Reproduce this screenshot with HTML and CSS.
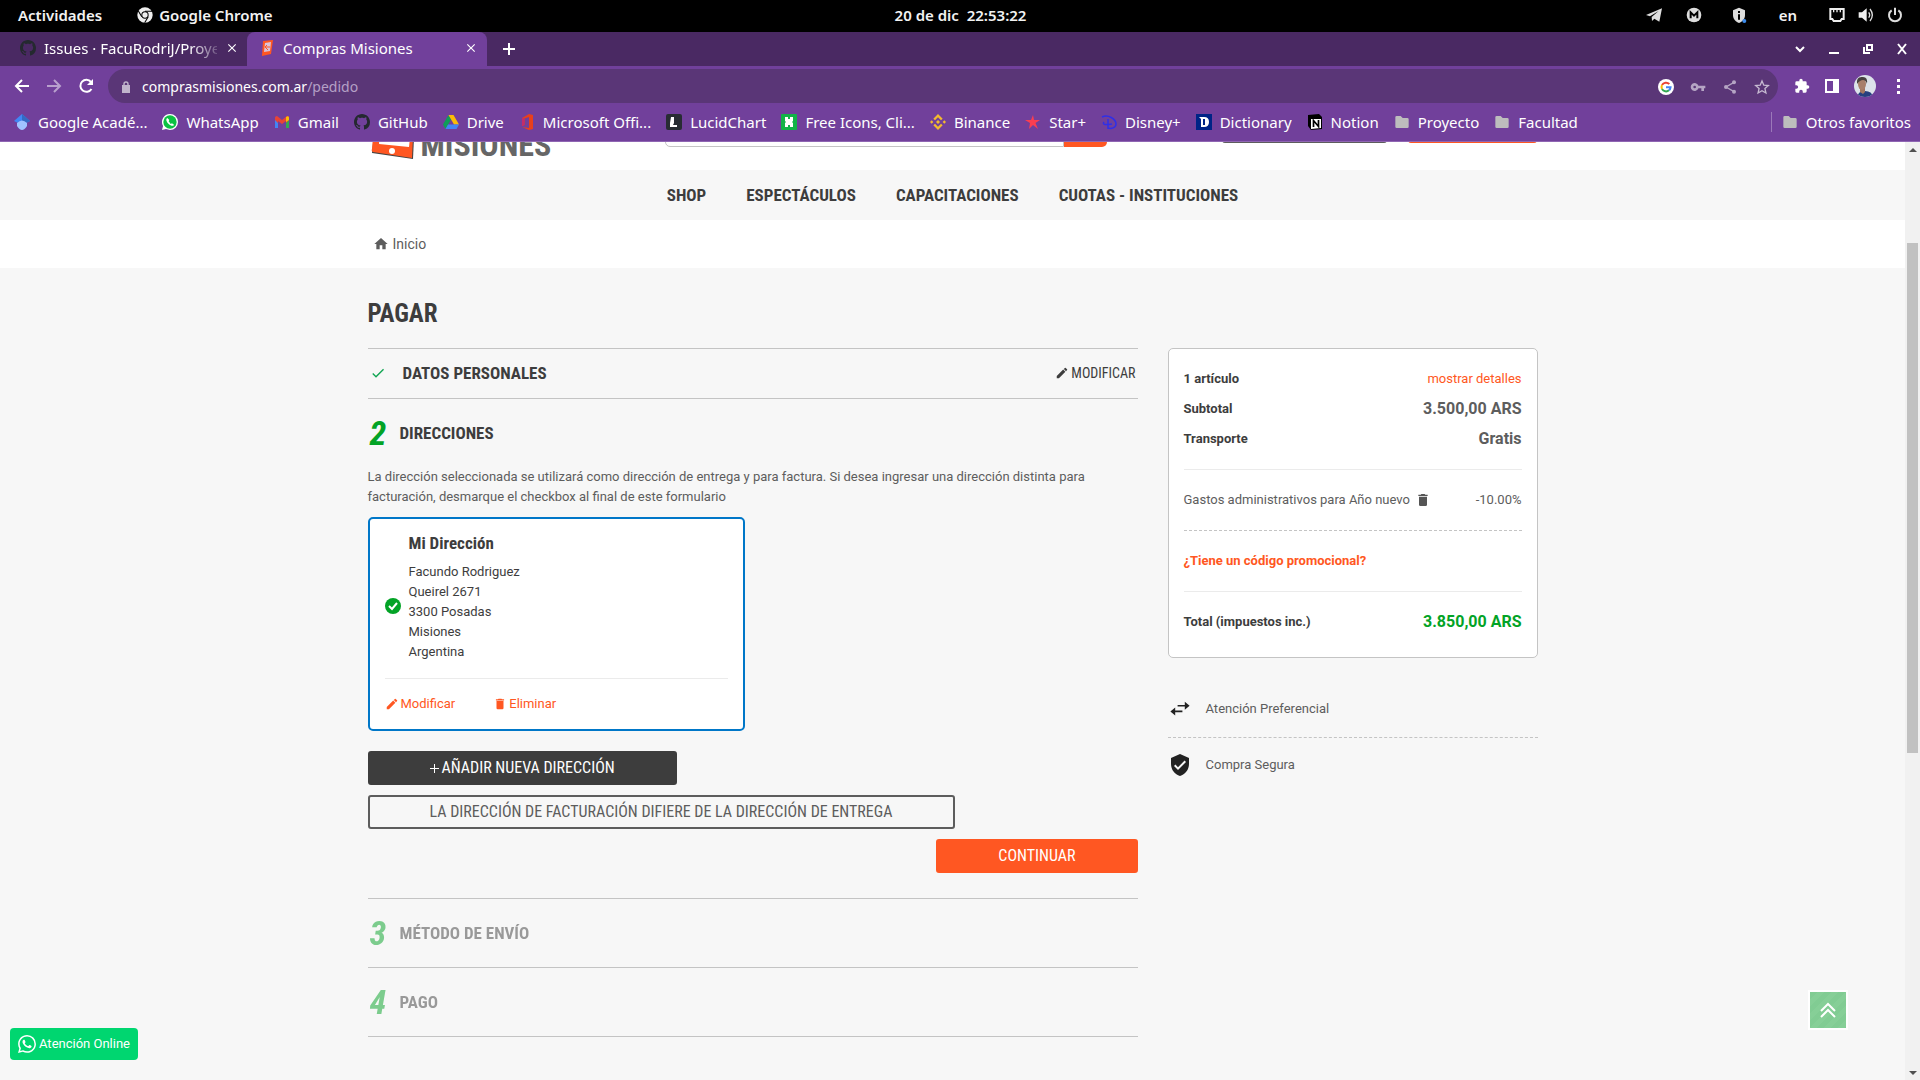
FILE: index.html
```html
<!DOCTYPE html>
<html lang="es">
<head>
<meta charset="utf-8">
<title>Compras Misiones</title>
<link rel="stylesheet" href="styles.css">
</head>
<body>
<svg class="sprite" aria-hidden="true">
  <symbol id="github" viewBox="0 0 16 16"><path d="M8 0C3.58 0 0 3.58 0 8c0 3.54 2.29 6.53 5.47 7.59.4.07.55-.17.55-.38 0-.19-.01-.82-.01-1.49-2.01.37-2.53-.49-2.69-.94-.09-.23-.48-.94-.82-1.13-.28-.15-.68-.52-.01-.53.63-.01 1.08.58 1.23.82.72 1.21 1.87.87 2.33.66.07-.52.28-.87.51-1.07-1.78-.2-3.64-.89-3.64-3.95 0-.87.31-1.59.82-2.15-.08-.2-.36-1.02.08-2.12 0 0 .67-.21 2.2.82.64-.18 1.32-.27 2-.27s1.36.09 2 .27c1.53-1.04 2.2-.82 2.2-.82.44 1.1.16 1.92.08 2.12.51.56.82 1.27.82 2.15 0 3.07-1.87 3.75-3.65 3.95.29.25.54.73.54 1.48 0 1.07-.01 1.93-.01 2.2 0 .21.15.46.55.38A8.01 8.01 0 0 0 16 8c0-4.42-3.58-8-8-8z"/></symbol>
  <symbol id="close" viewBox="0 0 24 24"><path d="M19 6.4 17.600 5 12 10.600 6.400 5 5 6.400 10.600 12 5 17.600 6.400 19 12 13.400 17.600 19 19 17.600 13.400 12z"/></symbol>
  <symbol id="folder" viewBox="0 0 24 24"><path d="M2 5a2 2 0 0 1 2-2h6l3 3h7a2 2 0 0 1 2 2v11a2 2 0 0 1-2 2H4a2 2 0 0 1-2-2z"/></symbol>
  <symbol id="pencil" viewBox="0 0 24 24"><path d="M3 17.250V21h3.750L17.810 9.940l-3.750-3.750zM20.710 7.040a1 1 0 0 0 0-1.410l-2.340-2.340a1 1 0 0 0-1.410 0l-1.830 1.830 3.750 3.750z"/></symbol>
  <symbol id="trash" viewBox="0 0 24 24"><path d="M6 19a2 2 0 0 0 2 2h8a2 2 0 0 0 2-2V7H6zM19 4h-3.500l-1-1h-5l-1 1H5v2h14z"/></symbol>
  <symbol id="whatsapp" viewBox="0 0 24 24"><path d="M17.472 14.382c-.297-.149-1.758-.867-2.030-.967-.273-.099-.471-.148-.670.150-.197.297-.767.966-.940 1.164-.173.199-.347.223-.644.075-.297-.150-1.255-.463-2.390-1.475-.883-.788-1.480-1.761-1.653-2.059-.173-.297-.018-.458.130-.606.134-.133.298-.347.446-.520.149-.174.198-.298.298-.497.099-.198.050-.371-.025-.520-.075-.149-.669-1.612-.916-2.207-.242-.579-.487-.500-.669-.510-.173-.008-.371-.010-.570-.010-.198 0-.520.074-.792.372-.272.297-1.040 1.016-1.040 2.479 0 1.462 1.065 2.875 1.213 3.074.149.198 2.096 3.200 5.077 4.487.709.306 1.262.489 1.694.625.712.227 1.360.195 1.871.118.571-.085 1.758-.719 2.006-1.413.248-.694.248-1.289.173-1.413-.074-.124-.272-.198-.570-.347m-5.421 7.403h-.004a9.870 9.870 0 0 1-5.031-1.378l-.361-.214-3.741.982.998-3.648-.235-.374a9.860 9.860 0 0 1-1.510-5.260c.001-5.450 4.436-9.884 9.888-9.884 2.640 0 5.122 1.030 6.988 2.898a9.825 9.825 0 0 1 2.893 6.994c-.003 5.450-4.437 9.884-9.885 9.884m8.413-18.297A11.815 11.815 0 0 0 12.050 0C5.495 0 .160 5.335.157 11.892c0 2.096.547 4.142 1.588 5.945L.057 24l6.305-1.654a11.882 11.882 0 0 0 5.683 1.448h.005c6.554 0 11.890-5.335 11.893-11.893a11.821 11.821 0 0 0-3.480-8.413z"/></symbol>
</svg>

<header class="topbar">
  <div class="topbar-left">
    <span>Actividades</span>
    <span class="topbar-app"><svg class="i16" viewBox="0 0 24 24"><circle cx="12" cy="12" r="11.500" fill="#eee"/><circle cx="12" cy="12" r="5.500" fill="#000"/><circle cx="12" cy="12" r="4" fill="#eee"/><path d="M12 6.500h10.500M7.200 14.700 2 6M16.800 14.700 11.500 23.500" stroke="#000" stroke-width="1.600" fill="none"/></svg>Google Chrome</span>
  </div>
  <time class="clock">20 de dic&nbsp; 22:53:22</time>
  <div class="topbar-right">
    <svg class="i16" viewBox="0 0 24 24" fill="#ddd"><path d="M0 12 24 2 20 22 12.500 17.500 9 21 8.500 15 19 6 6 14z"/></svg>
    <svg class="i16 gap-a" viewBox="0 0 24 24"><circle cx="12" cy="12" r="11" fill="#ddd"/><path d="M7 17V8l5 5 5-5v9" stroke="#000" stroke-width="3" fill="none"/></svg>
    <svg class="i16 gap-b" viewBox="0 0 24 24"><path d="M12 1 3 5v7c0 6 4 10 9 12 5-2 9-6 9-12V5z" fill="#ddd"/><path d="M12 6v3M12 11v8" stroke="#000" stroke-width="3"/><circle cx="20" cy="21" r="3" fill="#3b8beb"/></svg>
    <span class="lang">en</span>
    <svg class="i16" viewBox="0 0 24 24" fill="none" stroke="#eee" stroke-width="3"><path d="M2 3h20v15h-3l-2 3H7l-2-3H2z"/><path d="M7 4v4M12 4v4M17 4v4" stroke-width="2"/></svg>
    <svg class="i16 gap-c" viewBox="0 0 24 24"><path d="M1 8h5l7-6v20l-7-6H1z" fill="#eee"/><path d="M16 8q3 4 0 8M18 3q7 9 0 18" stroke="#ddd" stroke-width="2" fill="none"/></svg>
    <svg class="i16 gap-c" viewBox="0 0 24 24" fill="none" stroke="#ddd" stroke-width="3"><path d="M7 5a9 9 0 1 0 10 0M12 1v11"/></svg>
  </div>
</header>

<div class="tabstrip">
  <div class="tab">
    <svg class="i16" fill="#24292f"><use href="#github"/></svg>
    <span class="tab-title fade">Issues · FacuRodriJ/Proye</span>
    <button class="icon-btn" aria-label="Cerrar"><svg class="i14"><use href="#close"/></svg></button>
  </div>
  <div class="tab active">
    <svg class="i16" viewBox="0 0 16 16"><path d="m4 1 10-1-2 14-9 2z" fill="#ff5722"/><path d="m6 3 6-1-1 9-6 1z" fill="#d9c3d9"/><path d="M6 7h5M8 5l-2 2 3 3" stroke="#ff5722" fill="none"/></svg>
    <span class="tab-title">Compras Misiones</span>
    <button class="icon-btn" aria-label="Cerrar"><svg class="i14"><use href="#close"/></svg></button>
  </div>
  <button class="icon-btn newtab" aria-label="Nueva pestaña"><svg class="i14" viewBox="0 0 14 14"><path d="M6 1h2v5h5v2H8v5H6V8H1V6h5z"/></svg></button>
  <div class="window-buttons">
    <button class="icon-btn" aria-label="Buscar pestañas"><svg class="i12" viewBox="0 0 12 12" fill="none" stroke="#fff" stroke-width="2"><path d="m2 4 4 4 4-4"/></svg></button>
    <button class="icon-btn" aria-label="Minimizar"><svg class="i12" viewBox="0 0 12 12"><path d="M1 9h10v2H1z"/></svg></button>
    <button class="icon-btn" aria-label="Restaurar"><svg class="i12" viewBox="0 0 12 12" fill="none" stroke="#fff" stroke-width="2"><path d="M5 2h5v5H5zM2 4v6h6"/></svg></button>
    <button class="icon-btn" aria-label="Cerrar ventana"><svg class="i12" viewBox="0 0 12 12" fill="none" stroke="#fff" stroke-width="2"><path d="m2 1 8 10M10 1 2 11"/></svg></button>
  </div>
</div>

<div class="toolbar">
  <button class="icon-btn" aria-label="Atrás"><svg class="i16" viewBox="0 0 16 16" fill="none" stroke="#fff" stroke-width="2"><path d="M15 8H2M8 2 2 8l6 6"/></svg></button>
  <button class="icon-btn dim" aria-label="Adelante"><svg class="i16" viewBox="0 0 16 16" fill="none" stroke="#fff" stroke-width="2"><path d="M1 8h13M8 2l6 6-6 6"/></svg></button>
  <button class="icon-btn" aria-label="Recargar"><svg class="i16" viewBox="0 0 16 16" fill="none" stroke="#fff" stroke-width="2"><path d="M13.500 11A6 6 0 1 1 13 4l1 2"/><path d="M15 1v6H9z" fill="#fff" stroke="none"/></svg></button>
  <div class="omnibox">
    <svg class="i14" viewBox="0 0 14 14" fill="#c0b4cb"><path d="M3 5h8v8H3z"/><path d="M5 6V4a2 2 0 0 1 4 0v2" fill="none" stroke="#c0b4cb" stroke-width="1.400"/></svg>
    <span class="url">comprasmisiones.com.ar<span class="path">/pedido</span></span>
    <svg class="i16" viewBox="0 0 24 24"><circle cx="12" cy="12" r="12" fill="#fff"/><g fill="none" stroke-width="3"><path d="M17 7.500A7 7 0 0 0 6 9" stroke="#ea4335"/><path d="M6 9a7 7 0 0 0 0 6" stroke="#fbbc05"/><path d="M6 15a7 7 0 0 0 10.500 2" stroke="#34a853"/><path d="M16.500 17a7 7 0 0 0 2.300-4.500H12" stroke="#4285f4"/></g></svg>
    <svg class="i16" viewBox="0 0 24 24" fill="#b5a5c4"><path d="M12.700 10a6 6 0 1 0 0 4H17v4h4v-4h2v-4zM7 14a2 2 0 1 1 0-4 2 2 0 0 1 0 4z"/></svg>
    <svg class="i16" viewBox="0 0 24 24" fill="#b5a5c4"><circle cx="18" cy="5" r="3"/><circle cx="6" cy="12" r="3"/><circle cx="18" cy="19" r="3"/><path d="m18 5-12 7 12 7" fill="none" stroke="#b5a5c4" stroke-width="2"/></svg>
    <svg class="i16" viewBox="0 0 24 24" fill="none" stroke="#c6bad1" stroke-width="2"><path d="m12 3 2.700 6.300 6.800.600-5.100 4.500 1.500 6.600-5.900-3.500L6.100 21l1.500-6.600-5.100-4.500 6.800-.600z"/></svg>
  </div>
  <div class="extensions">
    <svg class="i16" viewBox="0 0 24 24" fill="#fff"><path d="M20.500 11H19V7a2 2 0 0 0-2-2h-4V3.500a2.500 2.500 0 0 0-5 0V5H4a2 2 0 0 0-2 2v3.800h1.500a2.700 2.700 0 0 1 0 5.400H2V20a2 2 0 0 0 2 2h3.800v-1.500a2.700 2.700 0 0 1 5.400 0V22H17a2 2 0 0 0 2-2v-4h1.500a2.500 2.500 0 0 0 0-5z"/></svg>
    <svg class="i16" viewBox="0 0 16 16"><path d="M1 1h14v14H1zM3 3v10h6V3z" fill="#fff" fill-rule="evenodd"/></svg>
    <svg class="i22" viewBox="0 0 22 22"><defs><clipPath id="av"><circle cx="11" cy="11" r="11"/></clipPath></defs><g clip-path="url(#av)"><path d="M0 0h22v22H0z" fill="#dce3ea"/><path d="M3 22q1-6 8-6t8 6z" fill="#27407f"/><path d="M6 13h5v4l-2 2-3-2z" fill="#a27761"/><ellipse cx="8" cy="9" rx="4" ry="6" fill="#a8806b"/><path d="M3 9q-1-8 6-7 5 0 4 7-1-4-4-4T3 9z" fill="#47423f"/></g></svg>
    <svg class="i16" viewBox="0 0 16 16" fill="#fff"><path d="M7 1h3v3H7zM7 7h3v3H7zM7 13h3v3H7z"/></svg>
  </div>
</div>

<nav class="bookmarks" aria-label="Marcadores">
  <a href="#"><svg class="i16" viewBox="0 0 16 16"><path d="M8 0 0 7l8 4 8-4z" fill="#4285f4"/><path d="M8 0v11l8-4z" fill="#356ac3"/><path d="M3 9q5-5 10 0v3q-5 8-10 0z" fill="#a0c3ff"/></svg>Google Acadé...</a>
  <a href="#"><svg class="i16" viewBox="0 0 24 24"><path d="M12 0a12 12 0 0 1 0 24l-6-1.500L0 24l1.600-6A12 12 0 0 1 12 0z" fill="#fff"/><circle cx="12" cy="12" r="10" fill="#0cc243"/><path d="M8 6c-3 2-1 6 2 9s7 4 8 1l-3-2-2 1-3-4 1-2z" fill="#fff"/></svg>WhatsApp</a>
  <a href="#"><svg class="i16" viewBox="0 0 16 16"><path d="M1 3v11h3V7z" fill="#4285f4"/><path d="M15 3v11h-3V7z" fill="#34a853"/><path d="M1 4q0-2 2-2l5 4 5-4q2 0 2 2v2l-3 3V7L8 10 4 7v2L1 6z" fill="#ea4335"/><path d="M12 3q3-2 3 1v2l-3 2z" fill="#fbbc05"/></svg>Gmail</a>
  <a href="#"><svg class="i16" fill="#24292f"><use href="#github"/></svg>GitHub</a>
  <a href="#"><svg class="i16" viewBox="0 0 16 16"><path d="M5.500 1 0 10.500 2.500 15 8 5.500z" fill="#0f9d58"/><path d="M5.500 1h5L16 10.500h-5z" fill="#fbbc05"/><path d="M5 10.500h11L13.500 15h-11z" fill="#4285f4"/></svg>Drive</a>
  <a href="#"><svg class="i16" viewBox="0 0 16 16"><path d="m10 0 4 1v14l-4 1-7-3 7 1V3L5.500 4.500V11L3 12V4z" fill="#e8401c"/><path d="m3 4 2.500.500V11L3 12z" fill="#c52b6b"/></svg>Microsoft Offi...</a>
  <a href="#"><svg class="i16" viewBox="0 0 16 16"><rect width="16" height="16" rx="2" fill="#282c33"/><path d="M5 3h3v6l-1 2h4v2H4V9z" fill="#fff"/></svg>LucidChart</a>
  <a href="#"><svg class="i16" viewBox="0 0 16 16"><rect width="16" height="16" rx="1" fill="#12b347"/><path d="M4 3h3v2h2V3h3v4l-1 1 1 1v4H9v-2H7v2H4V9l1-1-1-1z" fill="#fff"/></svg>Free Icons, Cli...</a>
  <a href="#"><svg class="i16" viewBox="0 0 24 24" fill="#f3ba2f"><path d="m12 0 7 7-2.500 2.500L12 5 7.500 9.500 5 7zM12 24l7-7-2.500-2.500L12 19l-4.500-4.500L5 17zM12 9l3 3-3 3-3-3zM2.600 9.500 5 12l-2.400 2.500L0 12zM21.400 9.500 24 12l-2.600 2.500L19 12z"/></svg>Binance</a>
  <a href="#"><svg class="i16" viewBox="0 0 16 16"><path d="m8 1 1 5 6 0-4.500 3L13 15 8 11l-4 4 1-6L0 6l6 0z" fill="#fb3e50"/></svg>Star+</a>
  <a href="#"><svg class="i16" viewBox="0 0 16 16" fill="none" stroke="#2f2fe8" stroke-width="1.500"><path d="M1 3c6-3 14 2 14 7 0 4-5 5-8 4M3 8c-2 3 2 3 8 2M7 5v10"/></svg>Disney+</a>
  <a href="#"><svg class="i16" viewBox="0 0 16 16"><path d="M0 0h16v16H0z" fill="#002486"/><path d="M3 3h5q5 0 5 5t-5 5H5V5z" fill="#fff"/><path d="M8 5v6" stroke="#002486" stroke-width="2"/></svg>Dictionary</a>
  <a href="#"><svg class="i16" viewBox="0 0 16 16"><path d="M1 1 12 0l3 3v12l-11 1-3-4z" fill="#000"/><path d="M4 5h10v9L4 15z" fill="#fff"/><path d="M6.500 13V6.500l5 6V6" stroke="#000" stroke-width="1.700" fill="none"/></svg>Notion</a>
  <a href="#"><svg class="i16" fill="#bdbdbd"><use href="#folder"/></svg>Proyecto</a>
  <a href="#"><svg class="i16" fill="#bdbdbd"><use href="#folder"/></svg>Facultad</a>
  <a href="#" class="other"><svg class="i16" fill="#bdbdbd"><use href="#folder"/></svg>Otros favoritos</a>
</nav>

<div class="viewport">
  <div class="page">
    <div class="site-header">
      <div class="container header-row">
        <a href="#" class="logo"><svg class="logo-mark" viewBox="0 0 44 46"><path d="m5 0 39 3-2 43L1 40z" fill="#444"/><path d="m4 0 39 3-2 42-39-6q-2-1-1-3z" fill="#ff5722"/><path d="m9 5 32 3-3 26L8 31z" fill="#fff"/><circle cx="21" cy="38" r="3" fill="#fff"/></svg><span>MISIONES</span></a>
        <div class="search"><input type="search" aria-label="Buscar"><button aria-label="Buscar"></button></div>
        <button class="header-btn outline" aria-label="Iniciar sesión"></button>
        <button class="header-btn solid" aria-label="Carrito"></button>
      </div>
    </div>
    <nav class="main-nav"><a href="#">SHOP</a><a href="#">ESPECTÁCULOS</a><a href="#">CAPACITACIONES</a><a href="#">CUOTAS - INSTITUCIONES</a></nav>
    <div class="crumbs"><div class="container"><a href="#"><svg class="i16" viewBox="0 0 24 24"><path d="M10 20v-6h4v6h5v-8h3L12 3 2 12h3v8z"/></svg>Inicio</a></div></div>

    <main class="container">
      <h1>PAGAR</h1>
      <div class="columns">
        <div class="steps">
          <section class="step done">
            <svg class="i16" viewBox="0 0 24 24" fill="#10a552"><path d="M9 16.200 4.800 12l-1.400 1.400L9 19 21 7l-1.400-1.400z"/></svg>
            <h2>DATOS PERSONALES</h2>
            <a href="#" class="edit"><svg class="i14"><use href="#pencil"/></svg>MODIFICAR</a>
          </section>
          <section class="step-open">
            <div class="step-head"><span class="num">2</span><h2>DIRECCIONES</h2></div>
            <p>La dirección seleccionada se utilizará como dirección de entrega y para factura. Si desea ingresar una dirección distinta para facturación, desmarque el checkbox al final de este formulario</p>
            <article class="address">
              <div class="address-body">
                <svg class="i16 check" viewBox="0 0 16 16"><circle cx="8" cy="8" r="8" fill="#03a326"/><path d="m4 8 3 3 5-6" fill="none" stroke="#fff" stroke-width="2"/></svg>
                <div>
                  <h3>Mi Dirección</h3>
                  <address>Facundo Rodriguez<br>Queirel 2671<br>3300 Posadas<br>Misiones<br>Argentina</address>
                </div>
              </div>
              <div class="address-actions">
                <a href="#"><svg class="i14"><use href="#pencil"/></svg>Modificar</a>
                <a href="#"><svg class="i14"><use href="#trash"/></svg>Eliminar</a>
              </div>
            </article>
            <div class="buttons">
              <button class="btn dark"><svg class="i10" viewBox="0 0 10 10"><path d="M4 1h1v4h4v1H5v4H4V6H0V5h4z"/></svg>AÑADIR NUEVA DIRECCIÓN</button>
              <button class="btn outline">LA DIRECCIÓN DE FACTURACIÓN DIFIERE DE LA DIRECCIÓN DE ENTREGA</button>
              <button class="btn primary">CONTINUAR</button>
            </div>
          </section>
          <section class="step-head pending"><span class="num">3</span><h2>MÉTODO DE ENVÍO</h2></section>
          <section class="step-head pending"><span class="num">4</span><h2>PAGO</h2></section>
        </div>

        <aside>
          <div class="summary">
            <div class="rows">
              <div class="row"><b>1 artículo</b><a href="#">mostrar detalles</a></div>
              <div class="row"><b>Subtotal</b><strong>3.500,00 ARS</strong></div>
              <div class="row"><b>Transporte</b><strong>Gratis</strong></div>
            </div>
            <div class="rows"><div class="row"><span class="voucher">Gastos administrativos para Año nuevo<button class="icon-btn" aria-label="Quitar"><svg class="i16" fill="#555"><use href="#trash"/></svg></button></span><span>-10.00%</span></div></div>
            <div class="rows dashed"><div class="row"><a href="#"><b>¿Tiene un código promocional?</b></a></div></div>
            <div class="rows"><div class="row"><b>Total (impuestos inc.)</b><strong class="total">3.850,00 ARS</strong></div></div>
          </div>
          <ul class="reassurance">
            <li><svg class="i24" viewBox="-3 0 30 26" fill="#222"><path d="M9 8h9V4l6 5-6 5v-4H9zM15 15H6v-4l-6 5 6 5v-4h9z"/></svg>Atención Preferencial</li>
            <li><svg class="i24" viewBox="0 0 24 24" fill="#222"><path d="M12 1 3 5v6c0 5.550 3.840 10.740 9 12 5.160-1.260 9-6.450 9-12V5zm-2 16-4-4 1.410-1.410L10 14.170l6.590-6.590L18 9z"/></svg>Compra Segura</li>
          </ul>
        </aside>
      </div>
    </main>
    <a href="#" class="wa"><svg class="i18"><use href="#whatsapp"/></svg>Atención Online</a>
    <button class="to-top" aria-label="Subir"><svg class="i16" viewBox="0 0 16 16" fill="none" stroke="#fff" stroke-width="2"><path d="m1 9 7-7 7 7M1 15l7-7 7 7"/></svg></button>
  </div>
  <div class="scrollbar" aria-hidden="true"><i class="up"></i><span class="track"><span class="thumb"></span></span><i class="down"></i></div>
</div>
</body>
</html>
```
FILE: styles.css
```css
* { box-sizing: border-box; }
body {
  margin: 0;
  height: 100vh;
  display: flex;
  flex-direction: column;
  overflow: hidden;
  font-family: Roboto, sans-serif;
  font-size: 13px;
  line-height: 20px;
  color: #5d5d5d;
}
a { color: inherit; text-decoration: none; }
h1, h2, h3, p, ul { margin: 0; padding: 0; }
svg { flex: none; display: block; }
button { font: inherit; cursor: pointer; }
.sprite { position: absolute; width: 0; height: 0; }
.i10 { width: 10px; height: 10px; }
.i12 { width: 12px; height: 12px; }
.i14 { width: 14px; height: 14px; }
.i16 { width: 16px; height: 16px; }
.i18 { width: 18px; height: 18px; }
.i22 { width: 22px; height: 22px; }
.i24 { width: 24px; height: 24px; }
.icon-btn { border: 0; padding: 0; background: none; fill: #fff; display: flex; }

/* Desktop bar */
.topbar, .tabstrip, .toolbar, .bookmarks { flex: none; display: flex; align-items: center; font-family: "Noto Sans", sans-serif; color: #fff; }
.topbar { height: 32px; background: #000; font-size: 15px; font-weight: 600; color: #f2f2f2; padding: 0 17px 2px 18px; }
.topbar-left, .topbar-right { flex: 1; display: flex; align-items: center; }
.topbar-left { gap: 35px; }
.topbar-app { display: flex; align-items: center; gap: 6px; }
.topbar-right { justify-content: flex-end; }
.gap-a { margin-left: 24px; }
.gap-b { margin-left: 29px; }
.gap-c { margin-left: 13px; }
.lang { margin: 0 32px; }

/* Browser frame */
.tabstrip { height: 34px; background: #4a2963; font-size: 15px; }
.tab { height: 34px; width: 247px; display: flex; align-items: center; gap: 8px; padding: 0 8px 2px 20px; }
.tab.active { width: 240px; padding: 0 9px 2px 12px; background: #71409b; border-radius: 8px 8px 0 0; }
.tab-title { flex: 1; min-width: 0; overflow: hidden; white-space: nowrap; }
.fade { mask-image: linear-gradient(90deg, #000 84%, transparent 104%); }
.newtab { margin-left: 15px; }
.window-buttons { margin-left: auto; display: flex; gap: 22px; padding-right: 12px; }
.toolbar { height: 40px; background: #71409b; padding-left: 14px; gap: 16px; }
.dim { opacity: .5; }
.omnibox { flex: 1; height: 34px; margin-left: -2px; display: flex; align-items: center; gap: 16px; padding: 1px 8px 0 11px; border-radius: 17px; background: #5a3677; font-size: 14px; }
.url { flex: 1; margin-left: -7px; }
.path { color: #b5a0c6; }
.extensions { display: flex; align-items: center; gap: 14px; padding-right: 14px; }
.bookmarks { height: 36px; background: #71409b; border-bottom: 1px solid #8f66b3; font-size: 15px; gap: 15px; padding: 0 9px 3px 14px; white-space: nowrap; }
.bookmarks a { display: flex; align-items: center; gap: 8px; }
.bookmarks .other { margin-left: auto; border-left: 1px solid #9b79b9; padding-left: 10px; }

/* Page */
.viewport { flex: 1; min-height: 0; display: flex; }
.page { flex: 1; background: #f7f7f7; }
.container { max-width: 1200px; margin: 0 auto; padding: 0 15px; }
.site-header { height: 28px; background: #fff; overflow: hidden; }
.header-row { height: 28px; display: flex; align-items: flex-end; }
.logo { display: flex; align-items: flex-end; gap: 6px; padding: 0 0 11px 3px; width: 297px; }
.logo-mark { width: 44px; height: 46px; }
.logo span { font: 700 32px/32px "Roboto Condensed", "Liberation Sans Narrow", sans-serif; color: #666; height: 30px; }
.search { display: flex; width: 442px; height: 40px; margin-bottom: 23px; }
.search input { flex: 1; border: 1px solid #c4c4c4; border-radius: 5px 0 0 5px; min-width: 0; }
.search button { width: 43px; border: 0; border-radius: 0 5px 5px 0; background: #ff5722; }
.header-btn { height: 40px; margin-bottom: 27px; border: 0; border-radius: 3px; }
.header-btn.outline { width: 165px; margin-left: 115px; background: #5d5d5d; }
.header-btn.solid { width: 129px; margin-left: 21px; background: #ff5722; }
.main-nav { height: 50px; display: flex; justify-content: center; align-items: center; gap: 40px; font: 700 17px/24px "Roboto Condensed", "Liberation Sans Narrow", sans-serif; color: #3d3d3d; }
.crumbs { height: 48px; background: #fff; font: 14px/20px Roboto, sans-serif; padding: 14px 0; }
.crumbs a { display: flex; align-items: center; gap: 4px; padding-left: 5px; fill: #5d5d5d; }
h1, h2, h3, .edit, .btn, .num { font-family: "Roboto Condensed", "Liberation Sans Narrow", sans-serif; }
h1 { padding: 32px 0 20px; font-size: 25px; line-height: 28px; color: #3d3d3d; }
h2, h3 { font-size: 17px; line-height: 24px; color: #3d3d3d; }
.columns { display: grid; grid-template-columns: minmax(0, 770fr) minmax(0, 370fr); gap: 30px; align-items: start; }
.step { height: 51px; border: solid #c4c4c4; border-width: 1px 0; display: flex; align-items: center; gap: 17px; padding: 0 2px 1px; }
.edit { margin-left: auto; display: flex; align-items: center; gap: 2px; font-size: 14px; color: #3d3d3d; fill: #3d3d3d; }
.step-head { display: flex; align-items: center; gap: 10px; height: 68px; }
.num { font-size: 34px; line-height: 40px; font-weight: 700; font-style: italic; color: #03a326; width: 22px; padding-left: 2px; }
.address { margin-top: 10px; width: 377px; max-width: 100%; border: 2px solid #0077c8; border-radius: 5px; background: #fff; padding: 12px 15px 15px; color: #3d3d3d; }
.address-body { display: flex; align-items: center; gap: 8px; padding-bottom: 16px; border-bottom: 1px solid #ebebeb; }
.check { margin-top: 18px; }
.address h3 { margin-bottom: 7px; }
address { font-style: normal; }
.address-actions { display: flex; gap: 38px; padding-top: 15px; color: #ff5722; fill: #ff5722; }
.address-actions a { display: flex; align-items: center; gap: 2px; }
.buttons { display: flex; flex-direction: column; align-items: flex-start; gap: 10px; padding: 20px 0 25px; }
.btn { height: 34px; padding: 0 60px; border: 2px solid; border-radius: 3px; font-size: 16px; display: flex; align-items: center; gap: 2px; white-space: nowrap; }
.btn.dark { background: #3d3d3d; border-color: #3d3d3d; color: #fff; fill: #fff; }
.btn.outline { background: none; border-color: #5d5d5d; color: #5d5d5d; }
.btn.primary { align-self: flex-end; background: #ff5722; border-color: #ff5722; color: #fff; }
.pending { height: 69px; border-top: 1px solid #c4c4c4; }
.pending:last-child { height: 70px; border-bottom: 1px solid #c4c4c4; }
.pending > * { opacity: .5; }
.summary { background: #fff; border: 1px solid #c4c4c4; border-radius: 5px; padding: 0 15px 5px; }
.rows { padding: 15px 0; border-top: 1px solid #ebebeb; }
.rows:first-child { border-top: 0; }
.rows.dashed { border-top: 1px dashed #c4c4c4; }
.row { display: flex; justify-content: space-between; align-items: center; height: 30px; }
.row b { color: #3d3d3d; }
.row a, .row a b { color: #ff5722; }
.row strong { font-size: 16px; }
.row .total { color: #03a326; }
.voucher { display: flex; align-items: center; gap: 5px; }
.reassurance { list-style: none; margin-top: 22px; }
.reassurance li { height: 57px; display: flex; align-items: center; gap: 14px; }
.reassurance li + li { height: 55px; border-top: 1px dashed #c4c4c4; }
.wa { position: fixed; left: 10px; bottom: 20px; height: 32px; padding: 0 8px; display: flex; align-items: center; gap: 3px; border-radius: 4px; background: #00d670; color: #fff; fill: #fff; }
.to-top { position: fixed; right: 72px; bottom: 50px; width: 40px; height: 40px; border: 2px solid #fff; display: grid; place-items: center; padding: 0; background: repeating-linear-gradient(135deg, #81cc93 0 5px, #86cf97 5px 10px); }
.scrollbar { width: 15px; background: #f1f1f1; display: flex; flex-direction: column; align-items: center; }
.scrollbar i { width: 15px; height: 15px; display: grid; place-items: center; }
.scrollbar i::after { content: ""; border: 4px solid transparent; }
.scrollbar .up::after { border-bottom-color: #505050; border-top-width: 0; }
.scrollbar .down::after { border-top-color: #505050; border-bottom-width: 0; }
.track { flex: 1; padding-top: 86px; }
.thumb { display: block; width: 11px; height: 62%; background: #c1c1c1; }
```
